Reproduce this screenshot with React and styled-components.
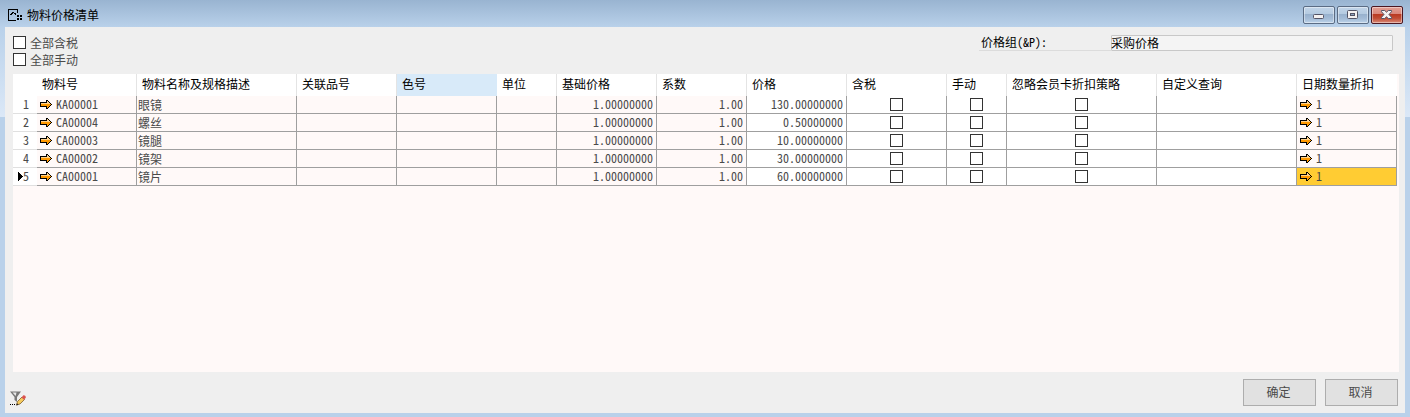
import React from "react";
import styled, { createGlobalStyle } from "styled-components";

const GlobalStyle = createGlobalStyle`
  * { box-sizing: border-box; }
  body {
    margin: 0;
    overflow: hidden;
    font: 12px/18px "Noto Sans CJK SC", sans-serif;
    font-feature-settings: "hwid" 1;
    color: #4a4a4a;
  }
`;

const Window = styled.div`
  width: 1410px;
  height: 417px;
  display: flex;
  flex-direction: column;
  padding: 0 5px 4px;
  background:
    linear-gradient(#99b4d1, #b9d1ea) 0 0 / 100% 27px no-repeat,
    linear-gradient(#b9d1ea, #dbe8f7) 0 27px / 100% 90px no-repeat,
    #b9d1ea;
`;

const TitleBar = styled.header`
  height: 27px;
  flex: none;
  display: flex;
  align-items: flex-start;
  padding: 6px 2px 0 3px;
`;

const Title = styled.h1`
  flex: 1;
  margin: 0 0 0 5px;
  font-size: 12px;
  font-weight: 400;
  line-height: 18px;
  color: #000;
`;

const AppIcon = styled.svg`
  width: 14px;
  height: 13px;
  margin-top: 3px;
`;

const WindowButtons = styled.div`
  display: flex;
  gap: 2px;
`;

const WindowButton = styled.button`
  width: 32px;
  height: 18px;
  padding: 0;
  display: flex;
  border: 1px solid ${(p) => (p.$danger ? "#4b1722" : "#5b6c84")};
  border-radius: 2px;
  background: ${(p) =>
    p.$danger
      ? "linear-gradient(#e3a095 0, #d9867a 45%, #b93a22 46%, #c14c34 70%, #d98a78)"
      : "linear-gradient(#c2d5e9 0, #b4cae0 45%, #98b1cd 46%, #a5bdd8 75%, #bdd3ea)"};
  box-shadow: inset 0 0 0 1px rgba(255, 255, 255, 0.42);
`;

const WindowGlyph = styled.svg`
  width: 30px;
  height: 16px;
`;

const Body = styled.main`
  flex: 1;
  display: flex;
  flex-direction: column;
  padding: 8px 6px 0 8px;
  background: #efefef;
`;

const Filters = styled.section`
  height: 39px;
  display: flex;
  justify-content: space-between;
  padding-right: 6px;
`;

const CheckLabel = styled.label`
  height: 17px;
  display: flex;
  align-items: flex-start;
  padding-top: 1px;
  gap: 4px;
  line-height: 13px;
`;

const Box = styled.input.attrs({ type: "checkbox" })`
  appearance: none;
  flex: none;
  width: 13px;
  height: 13px;
  margin: 0;
  border: 1px solid #333;
  background: #fff;
`;

const PriceGroup = styled.div`
  display: flex;
  height: 16px;
  color: #000;
  line-height: 13px;
`;

const PriceLabel = styled.label`
  width: 132px;
  padding-left: 2px;
  border-bottom: 1px solid #dcdcdc;
`;

const PriceValue = styled.div`
  width: 282px;
  border: 1px solid #c8c8c8;
  border-radius: 1px;
  background: #f4f4f4;
  line-height: 13px;
  text-indent: -1px;
`;

const Grid = styled.section`
  height: 298px;
  background: #fff9f8;
`;

const Row = styled.div`
  display: grid;
  grid-template-columns: 24px 100px 160px 100px 100px 60px 100px 90px 100px 100px 60px 150px 140px 100px;
  grid-auto-rows: ${(p) => (p.$head ? 22 : 18)}px;
  width: ${(p) => (p.$head ? "100%" : "1384px")};
  ${(p) => p.$head && "background: linear-gradient(90deg, #fff 1384px, #fff9f8 1384px);"}
`;

const HeadCell = styled.div`
  padding-left: 5px;
  border-right: 1px solid ${(p) => (p.$plain ? "transparent" : "#e4e4e4")};
  background: ${(p) => (p.$active ? "#d8eaf9" : "transparent")};
  line-height: 20px;
  color: #000;
  white-space: nowrap;
`;

const RowNumber = styled.div`
  display: flex;
  align-items: center;
  justify-content: flex-end;
  padding-right: 8px;
  background: #fff;
  border-bottom: 1px solid #e0e0e0;
  line-height: 17px;
`;

const Cell = styled.div`
  display: flex;
  align-items: center;
  justify-content: ${(p) => p.$align || "flex-start"};
  padding: ${(p) => (p.$align === "center" ? "0 0 1px" : "0 3px 0 1px")};
  border-right: 1px solid #9f9f9f;
  border-bottom: 1px solid #9f9f9f;
  background: ${(p) => (p.$active ? "#ffcc33" : p.$editable ? "#fff" : "#fff9f8")};
  line-height: 17px;
  white-space: nowrap;
`;

const Latin = styled.span`
  padding-bottom: 2px;
`;

const ArrowIcon = styled.svg`
  flex: none;
  width: 12px;
  height: 9px;
  margin: 0 4px 1px 2px;
`;

const Marker = styled.svg`
  width: 5px;
  height: 9px;
`;

const Footer = styled.footer`
  display: flex;
  flex: 1;
  justify-content: space-between;
  padding: 7px 1px 0 0;
  margin-left: -3px;
`;

const FilterIcon = styled.svg`
  width: 16px;
  height: 15px;
  margin-top: 12px;
`;

const Actions = styled.div`
  display: flex;
  gap: 9px;
`;

const ActionButton = styled.button`
  width: 73px;
  height: 27px;
  padding: 0 2px 2px 0;
  border: 1px solid #adadad;
  background: #e1e1e1;
  font: inherit;
  line-height: 22px;
  color: #4a4a4a;
`;

const heads = ["物料号", "物料名称及规格描述", "关联品号", "色号", "单位", "基础价格", "系数", "价格", "含税", "手动", "忽略会员卡折扣策略", "自定义查询", "日期数量折扣"];

const rows = [
  ["KA00001", "眼镜", "130.00000000"],
  ["CA00004", "螺丝", "0.50000000"],
  ["CA00003", "镜腿", "10.00000000"],
  ["CA00002", "镜架", "30.00000000"],
  ["CA00001", "镜片", "60.00000000"],
];

const Arrow = () => (
  <ArrowIcon viewBox="0 0 12 9" shapeRendering="crispEdges">
    <path fill="#000" d="M0 2h6V0h2v1h1v1h1v1h1v1h1v1h-1v1h-1v1H9v1H8v1H6V7H0z" />
    <path fill="#ff9900" d="M1 3h6V1h1v1h1v1h1v1h1v1h-1v1H9v1H8v1H7V6H1z" />
    <path fill="#ffd18c" d="M1 3h6V1h1v1h1v1h1v1H1z" />
  </ArrowIcon>
);

export default function App() {
  return (
    <>
      <GlobalStyle />
      <Window>
        <TitleBar>
          <AppIcon viewBox="0 0 14 13" shapeRendering="crispEdges">
            <path fill="#000" d="M0 0h10v4H9V1H1v10h7v1H0z" />
            <path fill="#000" d="M2 5h1V4h1V3h2v1H5v1H4v1H2zM6 4h2v2H7V5H6zM9 6h2v2H9zM12 6h2v2h-2zM9 9h2v2H9zM12 9h2v2h-2z" />
          </AppIcon>
          <Title>物料价格清单</Title>
          <WindowButtons>
            <WindowButton aria-label="最小化">
              <WindowGlyph viewBox="0 0 30 16">
                <rect x="9.5" y="7.5" width="10" height="4" rx="1" fill="#f4f1f1" stroke="#545466" />
              </WindowGlyph>
            </WindowButton>
            <WindowButton aria-label="最大化">
              <WindowGlyph viewBox="0 0 30 16">
                <rect x="9.5" y="3.5" width="10" height="8" rx="1" fill="#f4f1f1" stroke="#545466" />
                <rect x="12.5" y="6.5" width="4" height="2" fill="#90a5c0" stroke="#545466" />
              </WindowGlyph>
            </WindowButton>
            <WindowButton $danger aria-label="关闭">
              <WindowGlyph viewBox="0 0 30 16">
                <path d="M9.500 3.500h3.200L14.500 5.200l1.800-1.700h3.200v1.200L17 7.500l2.500 2.800v1.200h-3.200l-1.800-1.700-1.800 1.700H9.500v-1.200L12 7.500 9.500 4.700z" fill="#f4f1f1" stroke="#545466" />
              </WindowGlyph>
            </WindowButton>
          </WindowButtons>
        </TitleBar>
        <Body>
          <Filters>
            <div>
              <CheckLabel><Box />全部含税</CheckLabel>
              <CheckLabel><Box />全部手动</CheckLabel>
            </div>
            <PriceGroup>
              <PriceLabel>价格组(&amp;P):</PriceLabel>
              <PriceValue>采购价格</PriceValue>
            </PriceGroup>
          </Filters>
          <Grid>
            <Row $head>
              <HeadCell $plain />
              {heads.map((h, i) => (
                <HeadCell key={h} $active={i === 3} $plain={i === 3 || i === 12}>{h}</HeadCell>
              ))}
            </Row>
            {rows.map(([code, name, price], i) => (
              <Row key={code}>
                <RowNumber>
                  {i === 4 && (
                    <Marker viewBox="0 0 5 9" shapeRendering="crispEdges">
                      <path d="M0 0h1v1h1v1h1v1h1v1h1v1H4v1H3v1H2v1H1v1H0z" />
                    </Marker>
                  )}
                  <Latin>{i + 1}</Latin>
                </RowNumber>
                <Cell><Arrow /><Latin>{code}</Latin></Cell>
                <Cell>{name}</Cell>
                <Cell />
                <Cell />
                <Cell />
                <Cell $align="flex-end"><Latin>1.00000000</Latin></Cell>
                <Cell $align="flex-end"><Latin>1.00</Latin></Cell>
                <Cell $align="flex-end" $editable><Latin>{price}</Latin></Cell>
                <Cell $align="center" $editable><Box /></Cell>
                <Cell $align="center" $editable><Box /></Cell>
                <Cell $align="center" $editable><Box /></Cell>
                <Cell $editable />
                <Cell $active={i === 4}><Arrow /><Latin>1</Latin></Cell>
              </Row>
            ))}
          </Grid>
          <Footer>
            <FilterIcon viewBox="0 0 16 15">
              <path d="M0 .5h11L7 6v5L4.500 9V6z" fill="#777" />
              <path d="M2.500 1.500h4L5.700 5z" fill="#e8e8e8" />
              <path d="M0 13.500h6" stroke="#000" strokeDasharray="1 1" />
              <path d="M6.500 14l1-3.500L12 6l2.500 2.500L10 13z" fill="#f5c95c" stroke="#6b4b1c" strokeWidth=".7" />
              <path d="M11.500 6.500L13.200 4.500c1-.8 3.200 1 2.500 2.300L14 8.800z" fill="#d9534f" />
              <path d="M6.300 14.500l.7-2.200 1.500 1.500z" fill="#222" />
            </FilterIcon>
            <Actions>
              <ActionButton>确定</ActionButton>
              <ActionButton>取消</ActionButton>
            </Actions>
          </Footer>
        </Body>
      </Window>
    </>
  );
}
